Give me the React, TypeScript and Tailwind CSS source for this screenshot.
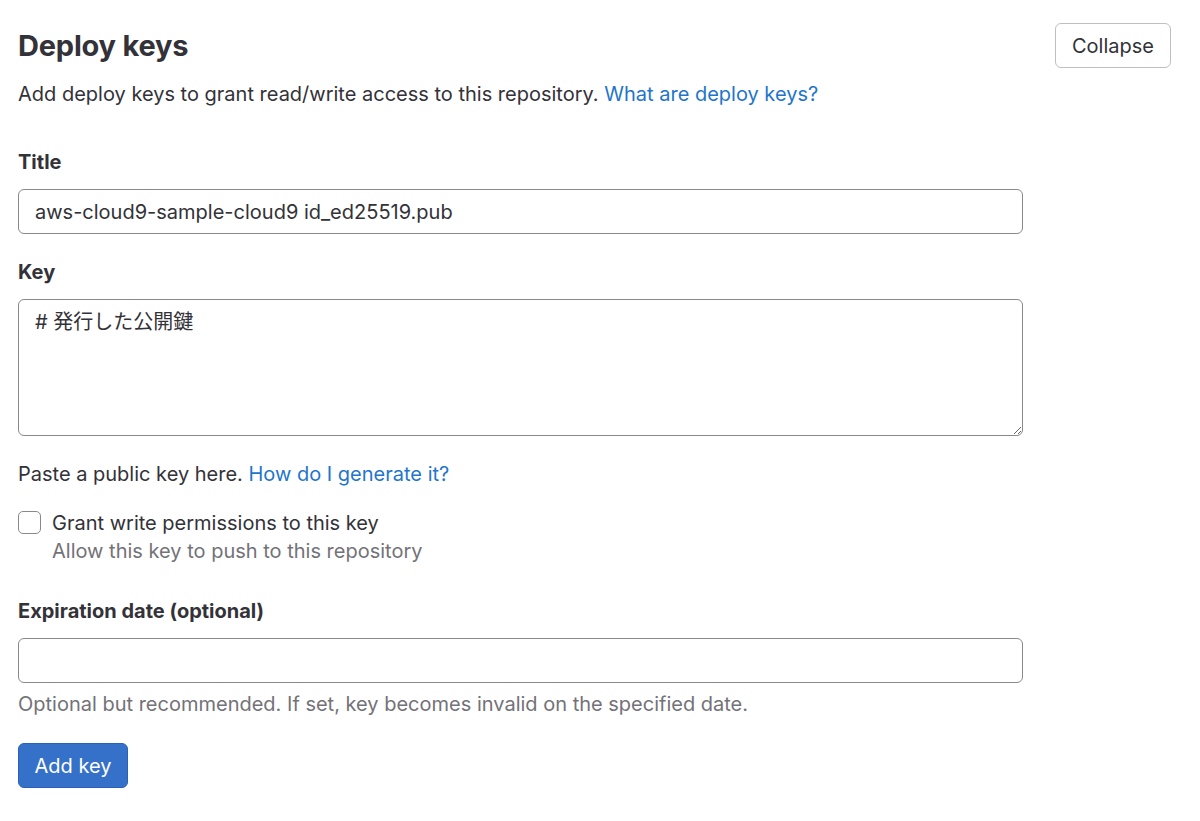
import React from "react";

export default function App() {
  return (
    <div
      className="min-h-screen bg-white text-[#333238] px-[18px] pt-[22px]"
      style={{ fontFamily: 'Inter, "Noto Sans CJK JP", sans-serif' }}
    >
      {/* Header */}
      <div className="flex items-start justify-between">
        <div>
          <h2 className="text-[29px] font-bold leading-[44px] mt-[2px] tracking-[-0.2px]">Deploy keys</h2>
          <p className="text-[20px] leading-[28px] mt-[12px]">
            Add deploy keys to grant read/write access to this repository.{" "}
            <a className="text-[#1f75cb]" href="#">What are deploy keys?</a>
          </p>
        </div>
        <button className="h-[45px] w-[116px] mr-[11px] mt-[1px] border border-[#bfbfc3] rounded-[6px] text-[20px] bg-white">
          Collapse
        </button>
      </div>

      <form className="w-[1005px] mt-[40px]" onSubmit={(e) => e.preventDefault()}>
        {/* Title */}
        <label className="block text-[20px] font-bold leading-[28px]">Title</label>
        <input
          className="block w-full h-[45px] mt-[13px] px-[16px] border border-[#89888d] rounded-[6px] text-[20px] outline-none"
          defaultValue="aws-cloud9-sample-cloud9 id_ed25519.pub"
        />

        {/* Key */}
        <label className="block text-[20px] font-bold leading-[28px] mt-[24px]">Key</label>
        <textarea
          className="block w-full h-[137px] mt-[13px] px-[16px] py-[8px] border border-[#89888d] rounded-[6px] text-[20px] leading-[28px] outline-none"
          defaultValue="# 発行した公開鍵"
        />
        <p className="text-[20px] leading-[28px] mt-[24px]">
          Paste a public key here.{" "}
          <a className="text-[#1f75cb]" href="#">How do I generate it?</a>
        </p>

        {/* Checkbox */}
        <div className="flex mt-[21px]">
          <span className="w-[23px] h-[23px] mt-[2px] border border-[#89888d] rounded-[5px] bg-white shrink-0" />
          <div className="ml-[11px]">
            <div className="text-[20px] leading-[28px]">Grant write permissions to this key</div>
            <div className="text-[20px] leading-[28px] text-[#737278]">Allow this key to push to this repository</div>
          </div>
        </div>

        {/* Expiration */}
        <label className="block text-[20px] font-bold leading-[28px] mt-[32px]">Expiration date (optional)</label>
        <input className="block w-full h-[45px] mt-[13px] px-[16px] border border-[#89888d] rounded-[6px] text-[20px] outline-none" />
        <p className="text-[20px] leading-[28px] mt-[7px] text-[#737278]">
          Optional but recommended. If set, key becomes invalid on the specified date.
        </p>

        <button className="mt-[25px] h-[45px] w-[110px] rounded-[6px] bg-[#3571c9] border border-[#2b62b5] text-white text-[20px]">
          Add key
        </button>
      </form>
    </div>
  );
}
